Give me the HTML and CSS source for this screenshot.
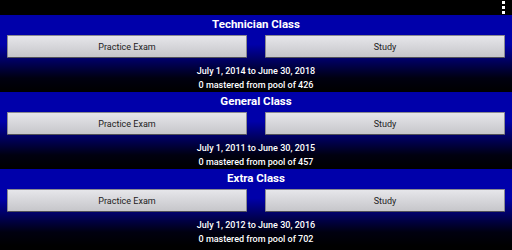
FILE: index.html
```html
<!DOCTYPE html>
<html>
<head>
  <title>Ham Exam</title>
  <link rel="stylesheet" href="styles.css">
</head>
<body>
  <div class="top-bar">
    <div class="menu-dots">
      <span></span><span></span><span></span>
    </div>
  </div>

  <div class="exam-class">
    <div class="class-title">Technician Class</div>
    <div class="button-row">
      <button>Practice Exam</button>
      <button>Study</button>
    </div>
    <div class="info">July 1, 2014 to June 30, 2018</div>
    <div class="info">0 mastered from pool of 426</div>
  </div>

  <div class="exam-class">
    <div class="class-title">General Class</div>
    <div class="button-row">
      <button>Practice Exam</button>
      <button>Study</button>
    </div>
    <div class="info">July 1, 2011 to June 30, 2015</div>
    <div class="info">0 mastered from pool of 457</div>
  </div>

  <div class="exam-class">
    <div class="class-title">Extra Class</div>
    <div class="button-row">
      <button>Practice Exam</button>
      <button>Study</button>
    </div>
    <div class="info">July 1, 2012 to June 30, 2016</div>
    <div class="info">0 mastered from pool of 702</div>
  </div>
</body>
</html>
```

FILE: styles.css
```css
body {
  font-family: Roboto, 'Noto Sans', sans-serif;
  background-color: black;
  margin: 0;
  color: white;
  width: 512px;
  height: 250px;
  overflow: hidden;
}

.top-bar {
  height: 15px;
  display: flex;
  justify-content: flex-end;
}

.menu-dots {
  display: flex;
  flex-direction: column;
  gap: 2px;
  padding: 1px 7px 0 0;
}

.menu-dots span {
  display: block;
  width: 3px;
  height: 3px;
  background-color: white;
}

.exam-class {
  height: 77px;
  box-sizing: border-box;
  padding-top: 1px;
  background: linear-gradient(#0000aa 0%, #0000aa 38%, #000010 82%, black 100%);
}

.class-title {
  text-align: center;
  font-size: 11.5px;
  font-weight: bold;
  line-height: 16px;
}

.button-row {
  display: flex;
  gap: 18px;
  padding: 0 7px;
  margin: 3px 0 6px;
}

button {
  flex: 1;
  height: 23px;
  border: 1px solid #8a8a90;
  border-bottom-color: #505058;
  border-radius: 1px;
  background: linear-gradient(#e6e6ea, #c6c6ca);
  font-family: Roboto, 'Noto Sans', sans-serif;
  font-size: 9px;
  color: #222;
  padding: 0;
}

.info {
  text-align: center;
  font-size: 9px;
  font-weight: 500;
  line-height: 14px;
}
```
